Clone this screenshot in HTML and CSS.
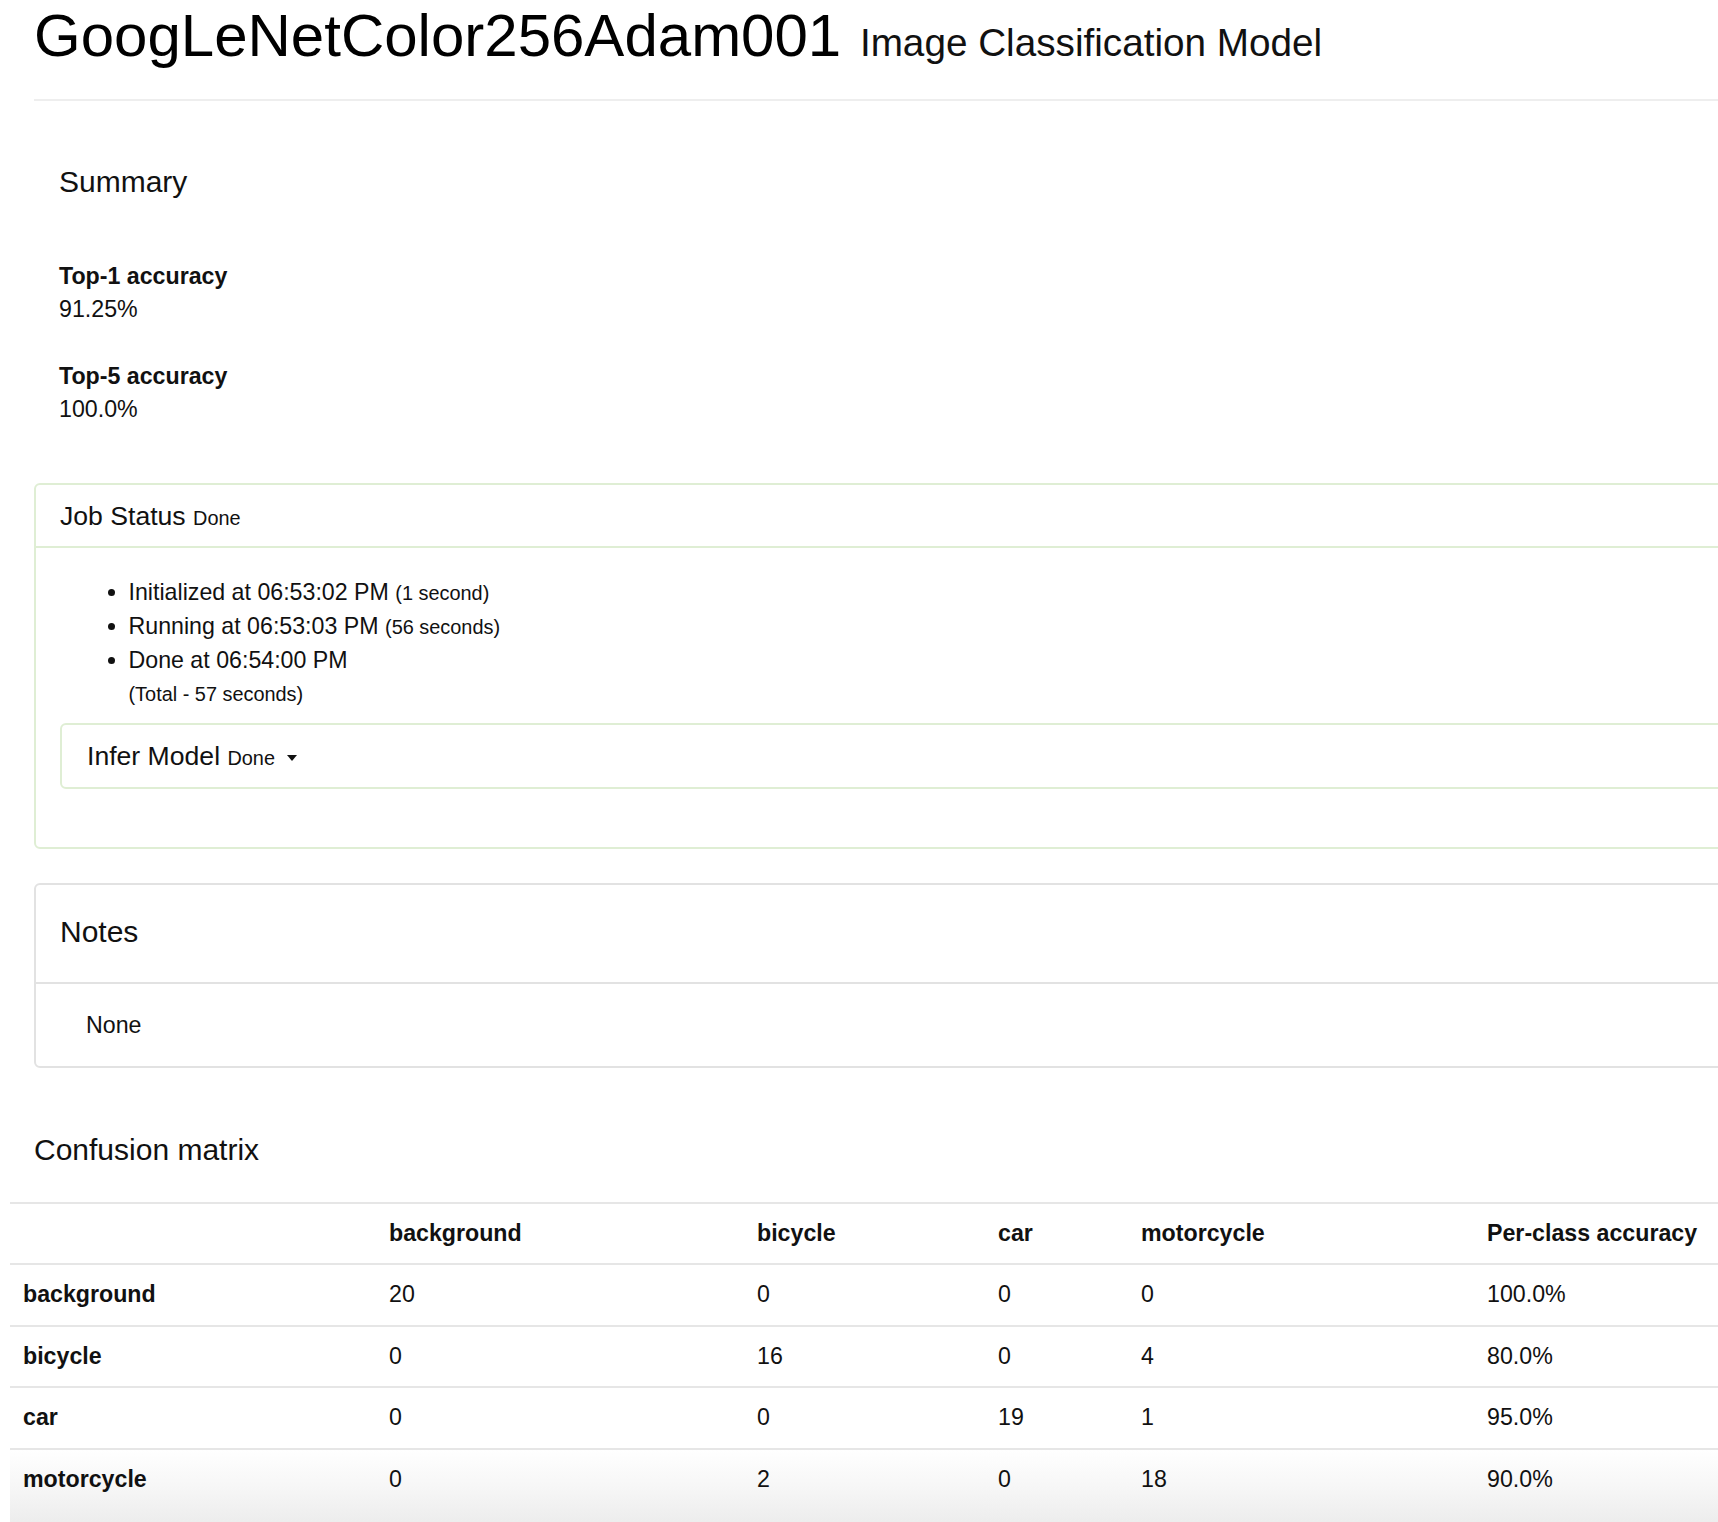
FILE: index.html
```html
<!DOCTYPE html>
<html lang="en">
<head>
<meta charset="utf-8">
<title>GoogLeNetColor256Adam001</title>
<link rel="stylesheet" href="styles.css">
</head>
<body>
<div class="page">
  <div class="page-header">
    <h1 class="title">GoogLeNetColor256Adam001 <small class="subtitle">Image Classification Model</small></h1>
  </div>

  <section class="summary">
    <h4 class="summary-title">Summary</h4>
    <dl class="stats">
      <div class="stat">
        <dt>Top-1 accuracy</dt>
        <dd>91.25%</dd>
      </div>
      <div class="stat">
        <dt>Top-5 accuracy</dt>
        <dd>100.0%</dd>
      </div>
    </dl>
  </section>

  <div class="panel panel-success job-panel">
    <div class="panel-heading">
      <span class="panel-title">Job Status <small class="status">Done</small></span>
    </div>
    <div class="panel-body">
      <ul class="timeline">
        <li>Initialized at 06:53:02 PM <small>(1 second)</small></li>
        <li>Running at 06:53:03 PM <small>(56 seconds)</small></li>
        <li>Done at 06:54:00 PM</li>
        <li class="total"><small>(Total - 57 seconds)</small></li>
      </ul>
      <div class="panel panel-success task-panel">
        <div class="task-heading">
          <span class="panel-title">Infer Model <small class="status">Done</small></span><span class="caret"></span>
        </div>
      </div>
    </div>
  </div>

  <div class="panel panel-default notes-panel">
    <div class="panel-heading notes-heading">
      <h4 class="notes-title">Notes</h4>
    </div>
    <div class="panel-body notes-body">None</div>
  </div>

  <h4 class="matrix-title">Confusion matrix</h4>
  <table class="matrix">
    <colgroup>
      <col class="c0"><col class="c1"><col class="c2"><col class="c3"><col class="c4"><col class="c5">
    </colgroup>
    <thead>
      <tr><th></th><th>background</th><th>bicycle</th><th>car</th><th>motorcycle</th><th>Per-class accuracy</th></tr>
    </thead>
    <tbody>
      <tr><th>background</th><td>20</td><td>0</td><td>0</td><td>0</td><td>100.0%</td></tr>
      <tr><th>bicycle</th><td>0</td><td>16</td><td>0</td><td>4</td><td>80.0%</td></tr>
      <tr><th>car</th><td>0</td><td>0</td><td>19</td><td>1</td><td>95.0%</td></tr>
      <tr class="last"><th>motorcycle</th><td>0</td><td>2</td><td>0</td><td>18</td><td>90.0%</td></tr>
    </tbody>
  </table>
</div>
</body>
</html>
```

FILE: styles.css
```css
html, body {
  margin: 0;
  padding: 0;
  overflow: hidden;
  background: #fff;
}
body {
  font-family: "Liberation Sans", Arial, Helvetica, sans-serif;
  font-size: 23.2px;
  line-height: 33.2px;
  color: #111;
}
.page {
  width: 1820px;
  padding-left: 34px;
}

/* Header */
.page-header {
  padding-bottom: 23.3px;
  border-bottom: 2px solid #eeeeee;
}
.title {
  margin: 3px 0 0 0;
  font-size: 60px;
  line-height: 66px;
  font-weight: normal;
  color: #000;
}
.subtitle {
  font-size: 38.7px;
  color: #111;
  margin-left: 2px;
}

/* Summary */
.summary {
  padding-left: 25px;
}
.summary-title {
  margin: 62.6px 0 0 0;
  font-size: 30px;
  line-height: 36px;
  font-weight: normal;
}
.stats {
  margin: 59.7px 0 0 0;
}
.stat + .stat {
  margin-top: 33.6px;
}
.stats dt {
  font-weight: bold;
}
.stats dd {
  margin: 0;
}

/* Panels */
.panel {
  border: 2px solid #dfeed4;
  border-radius: 6px;
  background: #fff;
}
.panel-success {
  border-color: #dfeed4;
}
.panel-default {
  border-color: #e2e2e2;
}
.job-panel {
  margin-top: 57.3px;
  width: 1760px;
}
.panel-heading {
  padding: 17px 23px 12.7px 24px;
  border-bottom: 2px solid #dfeed4;
  line-height: 29.3px;
}
.panel-title {
  font-size: 26.6px;
  line-height: 29.3px;
}
.status {
  font-size: 19.9px;
}
.panel-body {
  padding: 27.4px 25px 25px 25px;
}
.timeline {
  margin: 0 0 11.3px 0;
  padding-left: 67.5px;
}
.timeline small {
  font-size: 19.9px;
}
.timeline .total {
  list-style: none;
}
.task-panel {
  margin-left: -1px;
  margin-bottom: 33px;
}
.task-heading {
  padding: 17px 25px 14px 25px;
  display: flex;
  align-items: center;
  line-height: 29.3px;
}
.caret {
  display: inline-block;
  width: 0;
  height: 0;
  margin-left: 12px;
  margin-top: 2px;
  border-top: 6px solid #111;
  border-left: 5.5px solid transparent;
  border-right: 5.5px solid transparent;
}

/* Notes */
.notes-panel {
  margin-top: 34px;
  width: 1760px;
}
.notes-heading {
  padding: 30px 24px 34px 24px;
  border-bottom-color: #e2e2e2;
}
.notes-title {
  margin: 0;
  font-size: 30px;
  line-height: 33px;
  font-weight: normal;
}
.notes-body {
  padding: 25.4px 50px 23.4px 50px;
}

/* Confusion matrix */
.matrix-title {
  margin: 65px 0 0 0;
  font-size: 30px;
  line-height: 33px;
  font-weight: normal;
}
.matrix {
  margin: 36px 0 0 -24px;
  border-collapse: collapse;
  table-layout: fixed;
  width: 1800px;
}
.c0 { width: 366px; }
.c1 { width: 368px; }
.c2 { width: 241px; }
.c3 { width: 143px; }
.c4 { width: 346px; }
.c5 { width: 336px; }
.matrix th,
.matrix td {
  text-align: left;
  vertical-align: top;
  padding: 13px 13px 13.2px 13px;
  border-top: 2px solid #e6e6e6;
  line-height: 33.2px;
  white-space: nowrap;
}
.matrix th {
  font-weight: bold;
}
.matrix td {
  font-weight: normal;
}
.matrix tr.last th,
.matrix tr.last td {
  padding-bottom: 32px;
  background: linear-gradient(#ffffff 0%, #f6f6f6 50%, #ebebeb 100%);
}
```
